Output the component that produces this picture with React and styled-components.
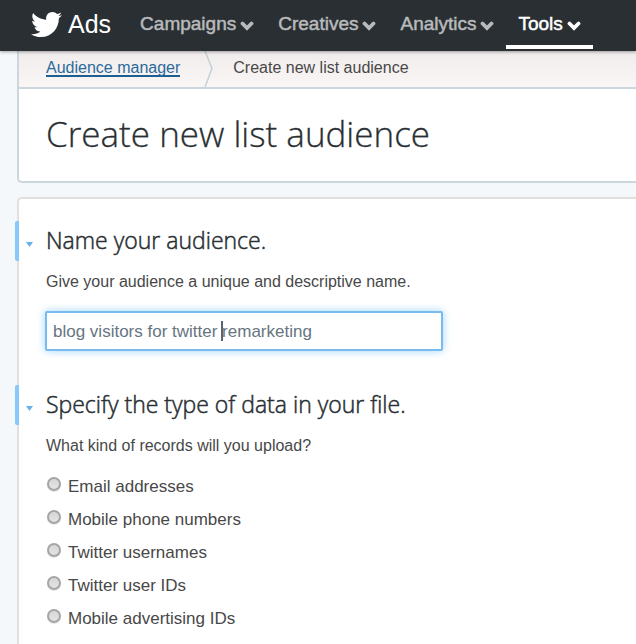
import React from "react";
import styled, { createGlobalStyle } from "styled-components";
import { FaTwitter } from "react-icons/fa";

const GlobalStyle = createGlobalStyle`
  *, *::before, *::after { box-sizing: border-box; }
  html, body, #root { min-height: 100%; }
  html { background: #f4f8fb; }
  body {
    margin: 0;
    overflow-x: hidden;
    color: #484848;
    font-family: "Liberation Sans", Arial, sans-serif;
    font-size: 16px;
    line-height: 20px;
  }
`;

const Page = styled.div`
  display: flex;
  flex-direction: column;
  min-height: 100vh;
`;

const TopBar = styled.header`
  display: flex;
  position: relative;
  z-index: 1;
  height: 51px;
  padding-left: 31px;
  background: #292f33;
  box-shadow: 0 1px 3px rgba(0, 0, 0, 0.35);
`;

const Brand = styled.a`
  display: flex;
  align-items: center;
  gap: 6px;
  height: 48px;
  margin-right: 17px;
  color: #fff;
  font-size: 25px;
  line-height: 28px;
  text-decoration: none;
`;

const Bird = styled(FaTwitter)`
  width: 31px;
  height: 31px;
`;

const Nav = styled.nav`
  display: flex;
`;

const NavButton = styled.button`
  display: flex;
  align-items: center;
  gap: 4px;
  height: 49px;
  padding: 2px 12px 0;
  border: 0;
  border-bottom: 4px solid ${(p) => (p.$active ? "#fff" : "transparent")};
  background: none;
  color: ${(p) => (p.$active ? "#fff" : "#b8babc")};
  font: 19px/24px "Liberation Sans", Arial, sans-serif;
  -webkit-text-stroke: 0.5px;
`;

const Chevron = styled.svg`
  width: 14px;
  height: 10px;
  margin-top: 5px;
  fill: none;
  stroke: currentColor;
  stroke-width: 3.8;
  stroke-linecap: round;
`;

const Main = styled.main`
  display: flex;
  flex: 1;
  flex-direction: column;
  gap: 14px;
  margin-left: 17px;
`;

const Panel = styled.section`
  border: 2px solid #ccd6dd;
  border-width: 0 0 2px 2px;
  border-radius: 0 0 0 5px;
  background: #fff;
`;

const FormPanel = styled.form`
  display: flex;
  flex: 1;
  flex-direction: column;
  gap: 34px;
  padding-top: 22px;
  border: 2px solid #e4dfdd;
  border-width: 2px 0 0 2px;
  border-radius: 5px 0 0 0;
  background: #fff;
`;

const Breadcrumb = styled.nav`
  display: flex;
  height: 38px;
  padding-left: 27px;
  border-bottom: 2px solid #ccd6dd;
  background: linear-gradient(#f0eceb, #faf6f5);
`;

const CrumbLink = styled.a`
  align-self: flex-start;
  margin-top: 10px;
  border-bottom: 2px solid #1b5f93;
  color: #2b6a9c;
  line-height: 14px;
  text-decoration: none;
`;

const CrumbDivider = styled.svg`
  width: 9px;
  height: 36px;
  margin: 0 20px 0 24px;
  fill: none;
  stroke: #c5cfd6;
  stroke-width: 1.5;
`;

const Crumb = styled.span`
  margin-top: 10px;
  line-height: 14px;
`;

const Title = styled.h1`
  margin: 0;
  padding: 21px 28px 23px 27px;
  color: #292f33;
  font: 300 35px/48px "Open Sans", sans-serif;
  -webkit-text-stroke: 0.3px;
`;

const Section = styled.fieldset`
  min-width: 0;
  margin: 0;
  padding: 0;
  border: 0;
`;

const SectionHead = styled.div`
  display: flex;
  align-items: center;
  gap: 13px;
  height: 40px;
  margin-left: -4px;
  border-left: 4px solid #88c9f9;
  border-radius: 2px 0 0 2px;
`;

const Toggle = styled.button`
  display: flex;
  margin-left: 7px;
  padding: 6px 0 0;
  border: 0;
  background: none;
`;

const Triangle = styled.svg`
  width: 7px;
  height: 5px;
  fill: #68b0e8;
`;

const Heading = styled.h2`
  margin: 0;
  padding-bottom: 2px;
  color: #292f33;
  font: 300 23px/32px "Open Sans", sans-serif;
  -webkit-text-stroke: 0.5px;
`;

const Body = styled.div`
  padding: 11px 27px 0;
`;

const Hint = styled.label`
  display: block;
`;

const Field = styled.div`
  position: relative;
  max-width: 398px;
  margin: 19px 0 0 -1px;
`;

const TextInput = styled.input`
  display: block;
  width: 100%;
  height: 40px;
  padding: 2px 6px 0;
  border: 2px solid #77bbf0;
  border-radius: 2px;
  outline: 0;
  background: #fff;
  box-shadow: 0 0 9px rgba(136, 201, 249, 0.8);
  color: #66757f;
  font: 17px/20px "Liberation Sans", Arial, sans-serif;
`;

const Caret = styled.span`
  position: absolute;
  top: 10px;
  left: 176px;
  width: 2px;
  height: 20px;
  background: #566673;
`;

const Options = styled.div`
  display: flex;
  flex-direction: column;
  margin-top: 14px;
`;

const Option = styled.label`
  display: flex;
  align-items: center;
  gap: 7px;
  height: 33px;
  font-size: 17px;
`;

const Radio = styled.input`
  appearance: none;
  width: 14px;
  height: 14px;
  margin: 0 0 5px 1px;
  border: 2px solid #a5a5a5;
  border-radius: 50%;
  background: linear-gradient(#d6d6d6, #e4e4e4);
  box-shadow: 0 1px 1px rgba(0, 0, 0, 0.1);

  &:checked {
    background: radial-gradient(#555 35%, #e4e4e4 45%);
  }
`;

const menus = ["Campaigns", "Creatives", "Analytics", "Tools"];

const recordTypes = [
  "Email addresses",
  "Mobile phone numbers",
  "Twitter usernames",
  "Twitter user IDs",
  "Mobile advertising IDs",
];

function SectionTitle({ children }) {
  return (
    <SectionHead>
      <Toggle type="button" aria-label="Toggle section">
        <Triangle viewBox="0 0 7 5">
          <path d="M0 0h7L3.5 5z" />
        </Triangle>
      </Toggle>
      <Heading>{children}</Heading>
    </SectionHead>
  );
}

export default function App() {
  return (
    <Page>
      <GlobalStyle />
      <TopBar>
        <Brand href="#">
          <Bird />
          Ads
        </Brand>
        <Nav>
          {menus.map((name) => (
            <NavButton key={name} type="button" $active={name === "Tools"}>
              {name}
              <Chevron viewBox="0 0 14 10">
                <path d="M2.5 2.5L7 7l4.500-4.500" />
              </Chevron>
            </NavButton>
          ))}
        </Nav>
      </TopBar>
      <Main>
        <Panel>
          <Breadcrumb>
            <CrumbLink href="#">Audience manager</CrumbLink>
            <CrumbDivider viewBox="0 0 9 36">
              <path d="M1 0l7 17.5L1 36" />
            </CrumbDivider>
            <Crumb>Create new list audience</Crumb>
          </Breadcrumb>
          <Title>Create new list audience</Title>
        </Panel>
        <FormPanel>
          <Section>
            <SectionTitle>Name your audience.</SectionTitle>
            <Body>
              <Hint htmlFor="audience-name">
                Give your audience a unique and descriptive name.
              </Hint>
              <Field>
                <TextInput
                  id="audience-name"
                  type="text"
                  defaultValue="blog visitors for twitter remarketing"
                />
                <Caret />
              </Field>
            </Body>
          </Section>
          <Section aria-labelledby="record-type">
            <SectionTitle>Specify the type of data in your file.</SectionTitle>
            <Body>
              <Hint as="div" id="record-type">
                What kind of records will you upload?
              </Hint>
              <Options>
                {recordTypes.map((name) => (
                  <Option key={name}>
                    <Radio type="radio" name="record-type" value={name} />
                    {name}
                  </Option>
                ))}
              </Options>
            </Body>
          </Section>
        </FormPanel>
      </Main>
    </Page>
  );
}
